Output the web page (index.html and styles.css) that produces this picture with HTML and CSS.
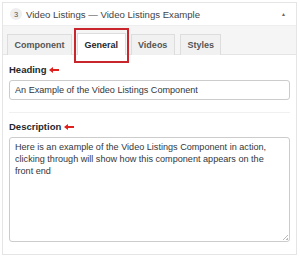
FILE: index.html
```html
<!DOCTYPE html>
<html>
<head>
<meta charset="utf-8">
<link rel="stylesheet" href="styles.css">
</head>
<body>
<div class="panel">
  <div class="header">
    <span class="badge">3</span>
    <span class="title">Video Listings — Video Listings Example</span>
    <span class="caret">▲</span>
  </div>
  <div class="tabs">
    <div class="tab">Component</div>
    <div class="tab active">General</div>
    <div class="tab">Videos</div>
    <div class="tab">Styles</div>
  </div>
  <div class="body">
    <div class="field">
      <div class="label">Heading <svg class="arrow" width="10" height="6" viewBox="0 0 10 6"><path d="M0 3 L4 0 L4 2 L10 2 L10 4 L4 4 L4 6 Z" fill="#e0201e"/></svg></div>
      <div class="input">An Example of the Video Listings Component</div>
    </div>
    <div class="field sep">
      <div class="label">Description <svg class="arrow" width="10" height="6" viewBox="0 0 10 6"><path d="M0 3 L4 0 L4 2 L10 2 L10 4 L4 4 L4 6 Z" fill="#e0201e"/></svg></div>
      <div class="textarea">Here is an example of the Video Listings Component in action, clicking through will show how this component appears on the front end<span class="grip"></span></div>
    </div>
  </div>
</div>
</body>
</html>
```
FILE: styles.css
```css
html, body { margin: 0; padding: 0; background: #fff; }
body { font-family: "Liberation Sans", Arial, sans-serif; color: #23282d; }
.panel {
  margin: 2px 3px 0 2px;
  border: 1px solid #e5e5e5;
  height: 253px;
  box-sizing: border-box;
  display: flex;
  flex-direction: column;
}
.header {
  height: 22px;
  display: flex;
  align-items: center;
  padding: 0 0 0 7px;
  border-bottom: 1px solid #eee;
  font-size: 9.6px;
  color: #444;
}
.badge {
  width: 12px; height: 12px; border-radius: 50%;
  background: #eee; color: #555; font-size: 7.5px;
  display: flex; align-items: center; justify-content: center;
  margin-right: 4px;
}
.title { flex: 1; }
.caret { font-size: 5px; color: #666; margin-right: 10px; }
.tabs {
  background: #f5f5f5;
  height: 28px;
  border-bottom: 1px solid #e5e5e5;
  display: flex;
  align-items: flex-end;
  padding-left: 4px;
  gap: 5px;
}
.tab {
  height: 21px;
  box-sizing: border-box;
  border: 1px solid #ddd;
  border-bottom: none;
  background: #f1f1f1;
  font-size: 9px;
  font-weight: bold;
  color: #555;
  display: flex; align-items: center;
  padding: 0 6.5px;
  margin-bottom: -1px;
}
.tab.active {
  background: #fff;
  color: #23282d;
  height: 22px;
  position: relative;
}
.tab.active::after {
  content: "";
  position: absolute;
  left: -4px; right: -4px; top: -6px; bottom: -8px;
  border: 2px solid #c9252c;
}
.body { padding: 0 6px 0 6px; flex: 1; display: flex; flex-direction: column; }
.field { padding-top: 9px; }
.field.sep { border-top: 1px solid #f0f0f0; margin-top: 12px; padding-top: 8px; }
.label { font-size: 9.5px; font-weight: bold; color: #23282d; display: flex; align-items: center; gap: 3px; margin-bottom: 5px; }
.arrow { display: block; }
.input {
  border: 1px solid #ccc; border-radius: 3px;
  height: 20px; box-sizing: border-box;
  font-size: 9.1px; color: #32373c;
  display: flex; align-items: center; padding: 0 5px;
}
.textarea {
  border: 1px solid #ccc; border-radius: 3px;
  height: 105px; box-sizing: border-box;
  font-size: 9.1px; line-height: 12px; color: #32373c;
  padding: 3px 5px;
  position: relative;
}
.grip {
  position: absolute; right: 1px; bottom: 1px;
  width: 5px; height: 5px;
  background: linear-gradient(135deg, transparent 50%, #bbb 50%, #bbb 60%, transparent 60%, transparent 75%, #bbb 75%);
}
```
